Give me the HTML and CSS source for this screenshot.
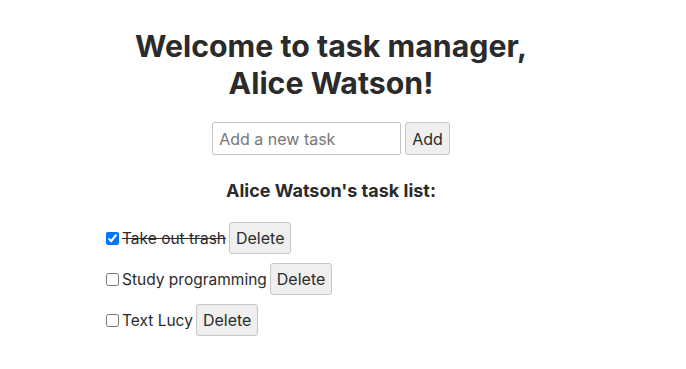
FILE: index.html
```html
<!DOCTYPE html>
<html lang="en">
<head>
    <meta charset="UTF-8">
    <meta name="viewport" content="width=device-width, initial-scale=1.0">
    <title>Task Manager</title>
    <link rel="stylesheet" href="styles.css">
</head>
<body>
    <div class="app">
        <h1 class="title">Welcome to task manager,<br>Alice Watson!</h1>
        <form class="add-form" onsubmit="return false">
            <input type="text" class="task-input" placeholder="Add a new task">
            <button type="submit" class="btn">Add</button>
        </form>
        <h3 class="list-title">Alice Watson's task list:</h3>
        <ul class="task-list">
            <li class="task">
                <input type="checkbox" checked>
                <span class="task-text done">Take out trash</span>
                <button class="btn">Delete</button>
            </li>
            <li class="task">
                <input type="checkbox">
                <span class="task-text">Study programming</span>
                <button class="btn">Delete</button>
            </li>
            <li class="task">
                <input type="checkbox">
                <span class="task-text">Text Lucy</span>
                <button class="btn">Delete</button>
            </li>
        </ul>
    </div>
</body>
</html>
```

FILE: styles.css
```css
body {
    margin: 0;
    padding: 8px;
    background-color: #fff;
    color: #2b2b2b;
    font-family: Inter, "Noto Sans", sans-serif;
}
.app {
    width: 450px;
    margin-left: 98px;
}
.title {
    font-size: 30.3px;
    font-weight: 700;
    line-height: 37px;
    text-align: center;
    margin: 20px 0 20px;
}
.add-form {
    display: flex;
    justify-content: center;
    gap: 4px;
}
.task-input {
    width: 189px;
    height: 33px;
    box-sizing: border-box;
    padding: 0 6px;
    font-family: inherit;
    font-size: 16px;
    color: #2b2b2b;
    border: 1px solid #c4c4c4;
    border-radius: 2px;
}
.task-input::placeholder {
    color: #777;
}
.btn {
    height: 33px;
    padding: 0 6px;
    font-family: inherit;
    font-size: 16px;
    color: #2b2b2b;
    background-color: #efefef;
    border: 1px solid #c6c6c6;
    border-radius: 3px;
}
.list-title {
    font-size: 18px;
    font-weight: 700;
    text-align: center;
    margin: 25px 0 21px;
}
.task-list {
    list-style: none;
    margin: 0;
    padding: 0;
    display: flex;
    flex-direction: column;
    gap: 9px;
}
.task {
    display: flex;
    align-items: center;
    gap: 3px;
}
.task input {
    margin: 0;
    width: 13px;
    height: 13px;
}
.task-text {
    font-size: 15.5px;
}
.task-text.done {
    text-decoration: line-through;
}
.task .btn {
    height: 32px;
}
```
